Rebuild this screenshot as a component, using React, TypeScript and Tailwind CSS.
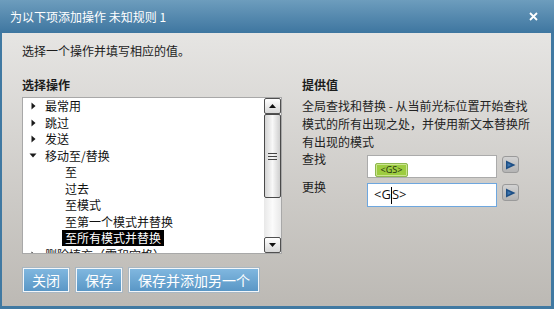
import React from "react";

const Tri = ({ open }: { open?: boolean }) =>
  open ? (
    <svg width="8" height="5" viewBox="0 0 8 5" className="ml-[6px] mr-[8px]">
      <path d="M0.5 0.5 L7.5 0.5 L4 4.5 Z" fill="#1a1a1a" />
    </svg>
  ) : (
    <svg width="5" height="8" viewBox="0 0 5 8" className="ml-[8px] mr-[9px]">
      <path d="M0.5 0.5 L4.5 4 L0.5 7.5 Z" fill="#1a1a1a" />
    </svg>
  );

const Parent = ({ label, open }: { label: string; open?: boolean }) => (
  <div className="h-[16.5px] flex items-center whitespace-nowrap">
    <Tri open={open} />
    <span>{label}</span>
  </div>
);

const Child = ({ label, sel }: { label: string; sel?: boolean }) => (
  <div className="h-[16.5px] flex items-center pl-[39px] whitespace-nowrap">
    <span className={sel ? "bg-black text-white px-[3px] h-[16px] leading-[16px]" : "px-[3px]"}>{label}</span>
  </div>
);

const ScrollBtn = ({ up }: { up?: boolean }) => (
  <div className="h-[16px] border border-[#505050] rounded-[2px] bg-gradient-to-b from-[#ffffff] to-[#d8d8d8] flex items-center justify-center">
    <svg width="7" height="4" viewBox="0 0 7 4">
      <path d={up ? "M0 4 L7 4 L3.5 0 Z" : "M0 0 L7 0 L3.5 4 Z"} fill="#111" />
    </svg>
  </div>
);

const ArrowBtn = () => (
  <div className="w-[17px] h-[17px] ml-[5px] mt-[1px] rounded-[3px] border border-[#9a9a9a] bg-gradient-to-b from-[#d2d2d2] to-[#b4b4b4] flex items-center justify-center">
    <svg width="11" height="10" viewBox="0 0 11 10">
      <path d="M1 0.5 L10.5 5 L1 9.5 Z" fill="#1d4f85" />
      <path d="M2.5 3 L6.5 5 L2.5 7 Z" fill="#3f77b0" />
    </svg>
  </div>
);

const Btn = ({ label, w }: { label: string; w: string }) => (
  <div
    className={`${w} h-[24px] border border-[#f3f6f9] shadow-[0_0_0_1px_#a9b7c2] bg-gradient-to-b from-[#80b7df] to-[#5a97c6] text-white text-[14px] flex items-center justify-center`}
  >
    {label}
  </div>
);

export default function App() {
  return (
    <div className="w-[554px] h-[309px] flex flex-col bg-[#4079a2] font-['Noto_Sans_CJK_SC',sans-serif] text-[12px] text-[#1c1c1c] overflow-hidden">
      <div className="h-[33px] shrink-0 flex items-center justify-between pl-[10px] pr-[16px] bg-gradient-to-b from-[#6d9dbd] to-[#3e76a0] text-white text-[12px]">
        <span>为以下项添加操作 未知规则 1</span>
        <svg width="9" height="9" viewBox="0 0 9 9">
          <path d="M1 1 L8 8 M8 1 L1 8" stroke="#fff" strokeWidth="1.8" />
        </svg>
      </div>
      <div className="flex-1 ml-[2px] mr-[3px] mb-[3px] bg-gradient-to-b from-[#e6e5e3] to-[#bcb9b4] pt-[9px] pl-[20px] flex flex-col">
        <div className="h-[18px] leading-[18px]">选择一个操作并填写相应的值。</div>
        <div className="flex mt-[17px]">
          <div className="w-[260px] flex flex-col">
            <div className="h-[16px] leading-[16px] font-bold">选择操作</div>
            <div className="mt-[4px] h-[157px] border border-[#a8a8a8] bg-white flex">
              <div className="flex-1 pt-[0px] overflow-hidden leading-[16px] text-[#111]">
                <Parent label="最常用" />
                <Parent label="跳过" />
                <Parent label="发送" />
                <Parent label="移动至/替换" open />
                <Child label="至" />
                <Child label="过去" />
                <Child label="至模式" />
                <Child label="至第一个模式并替换" />
                <Child label="至所有模式并替换" sel />
                <Parent label="删除填充（零和空格）" />
              </div>
              <div className="w-[17px] flex flex-col">
                <ScrollBtn up />
                <div className="h-[84px] border border-[#4a4a4a] rounded-[2px] bg-gradient-to-r from-[#d4d4d4] via-[#f8f8f8] to-[#cfcfcf] flex flex-col items-center justify-center gap-[2px]">
                  <div className="w-[9px] h-[1px] bg-[#444]" />
                  <div className="w-[9px] h-[1px] bg-[#444]" />
                  <div className="w-[9px] h-[1px] bg-[#444]" />
                </div>
                <div className="flex-1 bg-gradient-to-r from-[#e8e8e8] via-[#fbfbfb] to-[#e8e8e8]" />
                <ScrollBtn />
              </div>
            </div>
            <div className="flex mt-[14px] gap-[7px] pl-[1px]">
              <Btn label="关闭" w="w-[46px]" />
              <Btn label="保存" w="w-[46px]" />
              <Btn label="保存并添加另一个" w="w-[130px]" />
            </div>
          </div>
          <div className="ml-[20px] w-[220px] flex flex-col">
            <div className="h-[16px] leading-[16px] font-bold">提供值</div>
            <div className="mt-[4px] leading-[18px] text-[#222] w-[232px]">
              全局查找和替换 - 从当前光标位置开始查找模式的所有出现之处，并使用新文本替换所有出现的模式
            </div>
            <div className="flex items-start mt-[4px]">
              <div className="w-[65px] -mt-[4px] leading-[16px]">查找</div>
              <div className="w-[130px] h-[23px] bg-white border border-[#ababab] pl-[7px] pt-[3px]">
                <span className="inline-flex items-center justify-center w-[33px] h-[14px] rounded-[2px] border border-[#8fb850] bg-[#9dcc40] shadow-[inset_0_0_0_1px_#cbe58e] text-[9px] leading-[12px] text-[#1d2e0c] font-['Open_Sans',sans-serif]">
                  &lt;GS&gt;
                </span>
              </div>
              <ArrowBtn />
            </div>
            <div className="flex items-start mt-[5px]">
              <div className="w-[65px] -mt-[4px] leading-[16px]">更换</div>
              <div className="w-[130px] h-[24px] bg-white border border-[#6ea7df] pl-[6px] flex items-center text-[13px] font-['Open_Sans',sans-serif] text-[#111]">
                <span>&lt;G</span>
                <span className="w-[1px] h-[17px] bg-black" />
                <span>S&gt;</span>
              </div>
              <ArrowBtn />
            </div>
          </div>
        </div>
      </div>
    </div>
  );
}
